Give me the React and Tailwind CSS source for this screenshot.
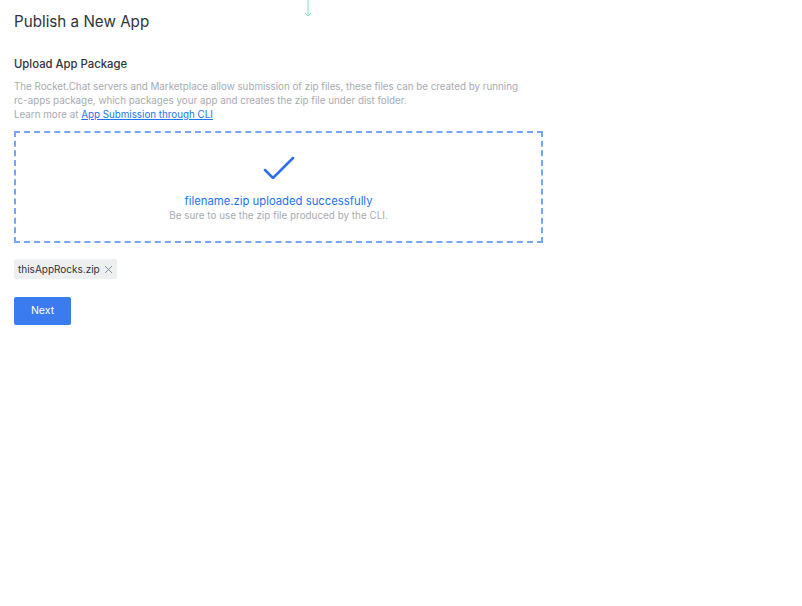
import React from 'react';

function CheckIcon() {
    return (
        <svg width="32" height="24" viewBox="0 0 32 24" fill="none">
            <path d="M2 15 L10 23 L30 3" stroke="#2f6fe8" strokeWidth="2.5" strokeLinecap="round" strokeLinejoin="round" />
        </svg>
    );
}

export default function App() {
    return (
        <div className="relative w-[802px] h-[606px] bg-white font-['Inter','Liberation_Sans',sans-serif] text-[#2f343d]">
            {/* ── stray arrow at top ── */}
            <svg className="absolute left-[303px] top-0" width="10" height="18" viewBox="0 0 10 18" fill="none">
                <path d="M5 0 V16 M2 13 L5 16 L8 13" stroke="#7fe3c2" strokeWidth="1" />
            </svg>

            <div className="px-[14px] pt-[11px] w-[557px]">
                <h1 className="text-[15.2px] leading-[22px] font-normal">Publish a New App</h1>

                <h2 className="mt-[22px] text-[11.3px] leading-[18px] font-medium">Upload App Package</h2>

                <p className="mt-[7px] text-[9.8px] leading-[14px] text-[#a7abb1]">
                    The Rocket.Chat servers and Marketplace allow submission of zip files, these files can be created by running
                    <br />
                    rc-apps package, which packages your app and creates the zip file under dist folder.
                    <br />
                    Learn more at <a href="#" className="text-[#1d74f5] underline">App Submission through CLI</a>
                </p>

                {/* ── Drop zone ── */}
                <div className="mt-[9px] h-[112px] border-2 border-dashed border-[#76a5f5] flex flex-col items-center pt-[22px]">
                    <CheckIcon />
                    <div className="mt-[14px] text-[11.3px] leading-[16px] text-[#1d74f5]">filename.zip uploaded successfully</div>
                    <div className="mt-0 text-[9.9px] leading-[13px] text-[#a7abb1]">Be sure to use the zip file produced by the CLI.</div>
                </div>

                {/* ── File chip ── */}
                <div className="mt-[16px] inline-flex items-center gap-[4px] h-[20px] px-[4px] bg-[#eeeff1] rounded-[2px] text-[10px] text-[#2f343d]">
                    <span>thisAppRocks.zip</span>
                    <svg width="9" height="9" viewBox="0 0 9 9" fill="none">
                        <path d="M1 1 L8 8 M8 1 L1 8" stroke="#8a8f96" strokeWidth="1" />
                    </svg>
                </div>

                <div className="mt-[17px]">
                    <button className="w-[57px] h-[28px] bg-[#3a7cf0] rounded-[2px] text-white text-[10.5px] font-normal">Next</button>
                </div>
            </div>
        </div>
    );
}
